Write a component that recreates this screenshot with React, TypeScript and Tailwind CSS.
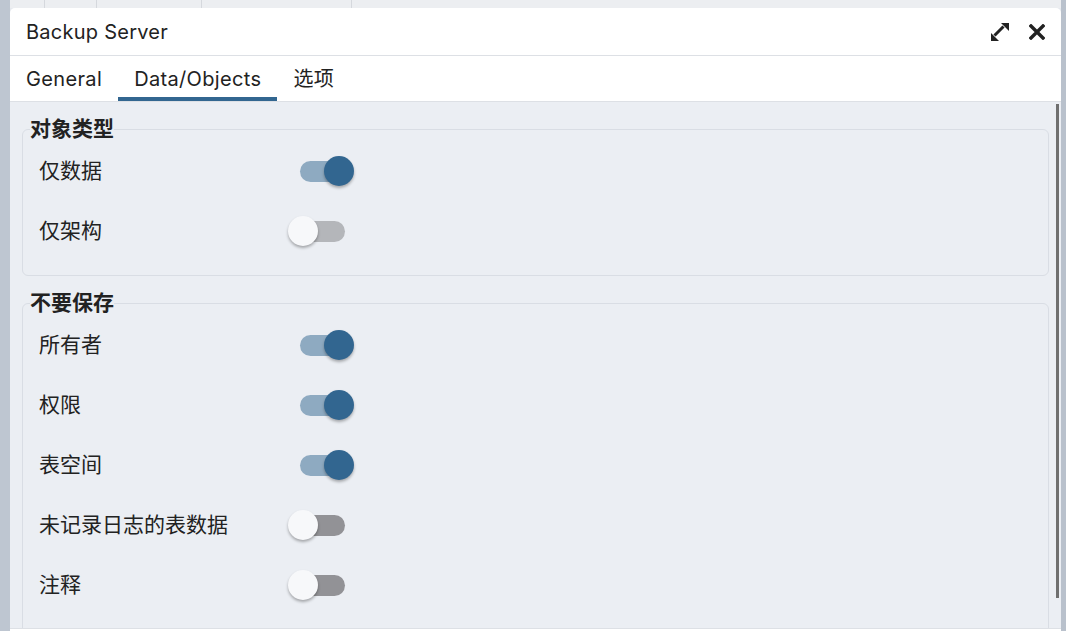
import React from "react";

interface ToggleProps {
  on: boolean;
  trackOff?: string;
}

const Toggle = ({ on, trackOff = "bg-[#b4b6ba]" }: ToggleProps) => {
  return (
    <div className="relative w-[66px] h-[30px] shrink-0">
      <div
        className={
          "absolute left-[12px] top-[5px] w-[45px] h-[21px] rounded-full " +
          (on ? "bg-[#8eaac1]" : trackOff)
        }
      />
      <div
        className={
          "absolute top-0 w-[30px] h-[30px] rounded-full shadow-[0_2px_3px_rgba(0,0,0,0.3)] " +
          (on ? "left-[36px] bg-[#326690]" : "left-0 bg-[#f7f8fa]")
        }
      />
    </div>
  );
};

interface RowProps {
  label: string;
  on: boolean;
  trackOff?: string;
}

const Row = ({ label, on, trackOff }: RowProps) => (
  <div className="flex items-center h-[60px]">
    <div className="w-[249px] text-[21px] text-[#222]">{label}</div>
    <Toggle on={on} trackOff={trackOff} />
  </div>
);

const Section = ({ title, children }: { title: string; children: React.ReactNode }) => (
  <fieldset className="border border-[#d9dde4] rounded-[6px]">
    <legend className="ml-[7px] text-[21px] leading-[24px] font-bold text-[#222]">{title}</legend>
    <div className="pl-[16px] pb-[14px]">{children}</div>
  </fieldset>
);

const ExpandIcon = () => (
  <svg width="20" height="20" viewBox="0 0 20 20" fill="#222">
    <path d="M4.5 13.5 L13.5 4.5" stroke="#222" strokeWidth="3" />
    <path d="M11 1 H19 V9 Z" />
    <path d="M1 11 V19 H9 Z" />
  </svg>
);

const CloseIcon = () => (
  <svg width="16" height="16" viewBox="0 0 16 16">
    <path d="M2 2 L14 14 M14 2 L2 14" stroke="#222" strokeWidth="3.4" strokeLinecap="square" />
  </svg>
);

export default function App() {
  return (
    <div
      className="w-[1066px] h-[631px] overflow-hidden flex flex-col bg-[#e6e9ee]"
      style={{ fontFamily: "Inter, 'Noto Sans CJK SC', sans-serif" }}
    >
      <div className="h-[8px] shrink-0 flex bg-[#eceef1]">
        <div className="w-[10px] bg-[#bec6d1]" />
        <div className="w-[35px] border-r border-[#d5d8dd]" />
        <div className="w-[52px] border-r border-[#d5d8dd]" />
        <div className="w-[105px] border-r border-[#d5d8dd]" />
        <div className="w-[150px] border-r border-[#d5d8dd]" />
        <div className="flex-1" />
        <div className="w-[5px] bg-[#b9c1cc]" />
      </div>
      <div className="flex flex-1 min-h-0">
        <div className="w-[10px] bg-[#bec6d1]" />
        <div className="flex-1 flex flex-col bg-white rounded-t-[5px] overflow-hidden">
          <div className="h-[48px] shrink-0 flex items-center justify-between pl-[16px] pr-[16px] border-b border-[#dde0e5]">
            <span className="text-[20px] tracking-[0.25px] text-[#222]">Backup Server</span>
            <div className="flex items-center gap-[19px] pt-[1px]">
              <ExpandIcon />
              <CloseIcon />
            </div>
          </div>
          <div className="h-[46px] shrink-0 flex border-b border-[#dde0e5] text-[20px] tracking-[0.35px] text-[#222]">
            <div className="px-[16px] flex items-center">General</div>
            <div className="px-[16px] flex items-center border-b-[4px] border-[#326690] pt-[4px]">Data/Objects</div>
            <div className="px-[16px] flex items-center">选项</div>
          </div>
          <div className="flex-1 min-h-0 flex bg-[#ebeef3] border-b border-[#dde0e5]">
            <div className="flex-1 flex flex-col gap-[15px] pt-[15px] pl-[12px] pr-[7px] overflow-hidden">
              <Section title="对象类型">
                <Row label="仅数据" on />
                <Row label="仅架构" on={false} />
              </Section>
              <Section title="不要保存">
                <Row label="所有者" on />
                <Row label="权限" on />
                <Row label="表空间" on />
                <Row label="未记录日志的表数据" on={false} trackOff="bg-[#929296]" />
                <Row label="注释" on={false} trackOff="bg-[#929296]" />
                <Row label="" on={false} trackOff="bg-[#929296]" />
              </Section>
            </div>
            <div className="w-[5px] pt-[2px]">
              <div className="w-[3px] h-[494px] bg-[#6f6f6f]" />
            </div>
          </div>
          <div className="h-[2px] shrink-0 bg-white" />
        </div>
        <div className="w-[5px] bg-[#b9c1cc]" />
      </div>
    </div>
  );
}
